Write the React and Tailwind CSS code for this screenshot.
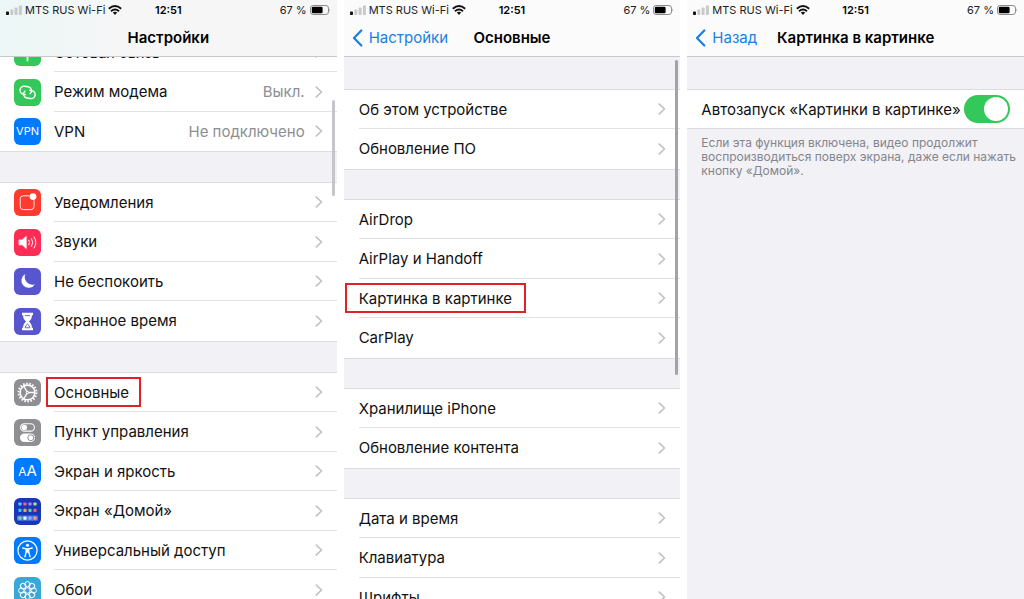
const PETALS = [0, 45, 90, 135, 180, 225, 270, 315];

const HOME_DOTS = [
  ["#5ac8fa", "#ff5e7a", "#b07cff", "#b6e36b"],
  ["#34c5e8", "#ff9f4a", "#5ad0a0", "#ff5a6a"],
  ["#6fe08a", "#f4f4ff", "#7fb4ff", "#ff9a6a"],
];

function Svg({ children }) {
  return (
    <svg viewBox="0 0 27 27" className="h-full w-full" fill="none" stroke="white" strokeLinecap="round" strokeLinejoin="round" aria-hidden="true">
      {children}
    </svg>
  );
}

function CellularIcon() {
  return (
    <Svg>
      <path d="M13.5 11v10.5" strokeWidth="1.8" />
      <path d="M9.5 17.5h8" strokeWidth="1.2" />
      <circle cx="13.5" cy="10" r="2" fill="white" />
    </Svg>
  );
}

function HotspotIcon() {
  return (
    <Svg>
      <g strokeWidth="1.4">
        <path d="M11.8 15.4H9.9a4 4 0 0 1 0-8h3.6a4 4 0 0 1 3 6.6" transform="rotate(8 11 12)" />
        <path d="M15.2 11.4h2a4 4 0 0 1 0 8h-3.6a4 4 0 0 1-3-6.6" transform="rotate(8 16 15)" />
      </g>
    </Svg>
  );
}

function NotificationsIcon() {
  return (
    <Svg>
      <path d="M15 6.8H9.2a3 3 0 0 0-3 3v7.8a3 3 0 0 0 3 3H17a3 3 0 0 0 3-3v-6" strokeWidth="0.9" />
      <circle cx="19" cy="7.6" r="3.4" fill="white" stroke="none" />
    </Svg>
  );
}

function SoundIcon() {
  return (
    <Svg>
      <path d="M5.4 11h2.8l4-3.6v12l-4-3.6H5.4z" fill="white" strokeWidth="0.8" />
      <path d="M14.9 11.2q1.4 2.2 0 4.6M17.5 9.6q2.6 3.8 0 7.8M20.1 8q3.6 5.4 0 11" strokeWidth="1" />
    </Svg>
  );
}

function MoonIcon() {
  return (
    <Svg>
      <path d="M11.4 6A7.3 7.3 0 1 0 21 16.2 A7.6 7.6 0 0 1 11.4 6z" fill="white" stroke="none" />
    </Svg>
  );
}

function HourglassIcon() {
  return (
    <Svg>
      <path d="M8 4.8h11v2.4h-1.1c0 3-1 4.6-3 6.3 2 1.7 3 3.3 3 6.3H19v2.4H8v-2.4h1.1c0-3 1-4.6 3-6.3-2-1.7-3-3.3-3-6.3H8z" fill="white" stroke="none" />
      <path d="M11.3 7.6h4.4M11.2 19.4q.4-2.4 2.3-3.3 1.9.9 2.3 3.3z" stroke="#5856ce" strokeWidth="0.9" />
    </Svg>
  );
}

function GearIcon() {
  return (
    <Svg>
      <circle cx="13.5" cy="13.5" r="9" strokeWidth="1.9" strokeDasharray="1.6 1.54" strokeLinecap="butt" />
      <circle cx="13.5" cy="13.5" r="7.4" strokeWidth="1.6" />
      <circle cx="13.5" cy="13.5" r="1.2" strokeWidth="1" />
      <path d="M14.5 13.5h6M13 12.6L9.6 7M13 14.4L9.6 20" strokeWidth="1.3" />
    </Svg>
  );
}

function ControlIcon() {
  return (
    <Svg>
      <rect x="6.6" y="4.7" width="13.8" height="7.4" rx="3.7" strokeWidth="1.1" />
      <circle cx="10.4" cy="8.4" r="2.7" fill="white" stroke="none" />
      <rect x="6" y="14.6" width="15" height="8.3" rx="4.15" fill="white" stroke="none" />
      <circle cx="16.8" cy="18.75" r="3" fill="white" stroke="#8e8e93" strokeWidth="1" />
    </Svg>
  );
}

function HomeIcon() {
  return (
    <Svg>
      <rect x="3" y="17.4" width="21" height="5.4" rx="1.4" fill="#4f78e0" stroke="none" />
      {HOME_DOTS.map((row, y) =>
        row.map((color, x) => (
          <rect key={`${x}-${y}`} x={4.4 + x * 5} y={4.4 + y * 6.4 + (y === 2 ? 1.4 : 0)} width="3.2" height="3.2" rx="0.8" fill={color} stroke="none" />
        ))
      )}
    </Svg>
  );
}

function AccessibilityIcon() {
  return (
    <Svg>
      <circle cx="13.5" cy="13.5" r="9.6" strokeWidth="1.2" />
      <circle cx="13.5" cy="8.2" r="1.5" fill="white" stroke="none" />
      <path d="M8.7 11l3.6.8v3l-1.4 5M18.3 11l-3.6.8v3l1.4 5" strokeWidth="1.3" />
      <path d="M12.3 11.4h2.4v4.2h-2.4z" fill="white" strokeWidth="0.5" />
    </Svg>
  );
}

function WallpaperIcon() {
  return (
    <Svg>
      <g strokeWidth="1">
        {PETALS.map((a) => (
          <circle key={a} cx="13.5" cy="7.3" r="2.7" transform={`rotate(${a} 13.5 13.5)`} />
        ))}
        <circle cx="13.5" cy="13.5" r="2.8" />
      </g>
    </Svg>
  );
}

const mainGroups = [
  [
    { label: "Сотовая связь", bg: "bg-[#34c759]", icon: <CellularIcon /> },
    { label: "Режим модема", value: "Выкл.", bg: "bg-[#34c759]", icon: <HotspotIcon /> },
    { label: "VPN", value: "Не подключено", bg: "bg-[#007aff]", icon: <span className="text-[11px]">VPN</span> },
  ],
  [
    { label: "Уведомления", bg: "bg-[#ff3b30]", icon: <NotificationsIcon /> },
    { label: "Звуки", bg: "bg-[#ff2d55]", icon: <SoundIcon /> },
    { label: "Не беспокоить", bg: "bg-[#5856ce]", icon: <MoonIcon /> },
    { label: "Экранное время", bg: "bg-[#5856ce]", icon: <HourglassIcon /> },
  ],
  [
    { label: "Основные", bg: "bg-[#8e8e93]", icon: <GearIcon />, mark: "-left-2 -right-3 -inset-y-[3px]" },
    { label: "Пункт управления", bg: "bg-[#8e8e93]", icon: <ControlIcon /> },
    {
      label: "Экран и яркость",
      bg: "bg-[#007aff]",
      icon: (
        <span className="text-[15px]">
          <span className="text-[12px]">A</span>A
        </span>
      ),
    },
    { label: "Экран «Домой»", bg: "bg-[#1838b8]", icon: <HomeIcon /> },
    { label: "Универсальный доступ", bg: "bg-[#007aff]", icon: <AccessibilityIcon /> },
    { label: "Обои", bg: "bg-[#37a8d8]", icon: <WallpaperIcon /> },
  ],
];

const generalGroups = [
  [{ label: "Об этом устройстве" }, { label: "Обновление ПО" }],
  [
    { label: "AirDrop" },
    { label: "AirPlay и Handoff" },
    { label: "Картинка в картинке", mark: "-inset-x-3.5 -inset-y-[3px]" },
    { label: "CarPlay" },
  ],
  [{ label: "Хранилище iPhone" }, { label: "Обновление контента" }],
  [{ label: "Дата и время" }, { label: "Клавиатура" }, { label: "Шрифты" }],
];

function StatusBar() {
  return (
    <div className="grid h-5 grid-cols-[1fr_auto_1fr] items-center px-1.5 text-[11px] text-[#222]">
      <div className="flex items-center gap-[3px] whitespace-nowrap">
        <svg viewBox="0 0 16 10" className="h-2.5 w-4" aria-hidden="true">
          <rect x="0" y="6.5" width="3" height="3.5" rx="0.8" fill="#111" />
          <rect x="4.3" y="4.5" width="3" height="5.5" rx="0.8" fill="#c9c9cb" />
          <rect x="8.6" y="2.5" width="3" height="7.5" rx="0.8" fill="#c9c9cb" />
          <rect x="12.9" y="0.5" width="3" height="9.5" rx="0.8" fill="#c9c9cb" />
        </svg>
        <span>MTS RUS Wi-Fi</span>
        <svg viewBox="0 0 14 10" className="h-2.5 w-3.5" fill="none" stroke="#111" strokeWidth="1.9" aria-hidden="true">
          <path d="M0.8 3.8Q7-1.6 13.2 3.8M3 6.2Q7 2.8 11 6.2" />
          <path d="M7 9.9L4.8 7.6Q7 6 9.2 7.6z" fill="#111" stroke="none" />
        </svg>
      </div>
      <span className="font-semibold text-black">12:51</span>
      <div className="flex items-center justify-end gap-[3px]">
        <span>67 %</span>
        <svg viewBox="0 0 21 10" className="h-2.5 w-[21px]" aria-hidden="true">
          <rect x="0.5" y="0.5" width="18" height="9" rx="2.6" fill="none" stroke="#8b8b8d" />
          <rect x="1.8" y="1.8" width="10.8" height="6.4" rx="1.3" fill="#000" />
          <path d="M19.4 3.4q1.5 1.6 0 3.2z" fill="#8b8b8d" />
        </svg>
      </div>
    </div>
  );
}

function Header({ title, back, className = "bg-[#fbfbfc]" }) {
  return (
    <header className={`shrink-0 border-b border-[#c9c9cd] ${className}`}>
      <StatusBar />
      <div className="grid h-9 grid-cols-[1fr_auto_1fr] items-center px-2">
        <div>
          {back && (
            <button type="button" className="flex items-center gap-1.5 text-[15px] text-[#1a7ee6]">
              <svg viewBox="0 0 11 18" className="h-[18px] w-[11px]" fill="none" stroke="currentColor" strokeWidth="2.2" strokeLinecap="round" strokeLinejoin="round" aria-hidden="true">
                <path d="M9.3 1.5L2 9l7.3 7.5" />
              </svg>
              {back}
            </button>
          )}
        </div>
        <h1 className="text-[15px] font-semibold text-black">{title}</h1>
        <div />
      </div>
    </header>
  );
}

function Row({ label, value, icon, bg, mark }) {
  return (
    <li className="group odd:h-[39px] even:h-10">
      <a href="#" className={`flex h-full items-center gap-[13px] ${icon ? "pl-3.5" : "pl-[15px]"}`}>
        {icon && (
          <span className={`flex size-[27px] shrink-0 items-center justify-center overflow-hidden rounded-md text-white ${bg}`}>
            {icon}
          </span>
        )}
        <span className="flex h-full min-w-0 flex-1 items-center gap-2.5 border-b border-[#e2e2e5] pr-3.5 group-last:border-transparent">
          <span className="relative pt-0.5 text-[#111]">
            {label}
            {mark && <span className={`absolute border-2 border-[#dd2328] ${mark}`} />}
          </span>
          <span className="ml-auto pt-0.5 text-[#8e8e92]">{value}</span>
          <svg viewBox="0 0 8 12" className="h-3 w-2 shrink-0" fill="none" stroke="#c2c2c5" strokeWidth="1.7" strokeLinecap="round" strokeLinejoin="round" aria-hidden="true">
            <path d="M1.3 1.2L6.5 6l-5.2 4.8" />
          </svg>
        </span>
      </a>
    </li>
  );
}

function Groups({ groups, className }) {
  return (
    <div className={`flex flex-col text-[15px] ${className}`}>
      {groups.map((rows, i) => (
        <ul key={i} className="bg-white ring-1 ring-[#dddde1]">
          {rows.map((row) => (
            <Row key={row.label} {...row} />
          ))}
        </ul>
      ))}
    </div>
  );
}

function Screen({ children }) {
  return <section className="flex min-h-0 min-w-0 flex-col overflow-hidden bg-[#f1f1f6]">{children}</section>;
}

export default function App() {
  return (
    <div className="grid h-screen grid-cols-3 grid-rows-1 gap-[7px] overflow-hidden bg-white font-['Inter','Liberation_Sans',sans-serif]">
      <Screen>
        <Header title="Настройки" className="bg-linear-to-r from-[#ebf7f6] via-[#f6f6f7] via-35% to-[#f6f6f7]" />
        <main className="relative min-h-0 flex-1 overflow-hidden">
          <Groups groups={mainGroups} className="-mt-6 gap-8" />
          <div className="absolute right-0.5 top-[43px] h-24 w-[3px] rounded-full bg-[#c6c6ca]" />
        </main>
      </Screen>

      <Screen>
        <Header title="Основные" back="Настройки" />
        <main className="relative min-h-0 flex-1 overflow-hidden">
          <Groups groups={generalGroups} className="gap-[31px] pt-[33px]" />
          <div className="absolute right-0.5 top-[3px] h-[315px] w-[3px] rounded-full bg-[#a3a3a6]" />
        </main>
      </Screen>

      <Screen>
        <Header title="Картинка в картинке" back="Назад" />
        <main className="min-h-0 flex-1 overflow-hidden pt-[33px]">
          <div className="flex h-[38px] items-center justify-between bg-white px-3.5 text-[15px] text-[#111] ring-1 ring-[#dddde1]">
            <label htmlFor="pip" className="whitespace-nowrap pt-0.5">
              Автозапуск «Картинки в картинке»
            </label>
            <input
              id="pip"
              type="checkbox"
              role="switch"
              defaultChecked
              className="flex h-7 w-[46px] shrink-0 appearance-none items-center rounded-full bg-[#d9d9dd] px-0.5 before:size-6 before:rounded-full before:bg-white checked:justify-end checked:bg-[#34c759]"
            />
          </div>
          <p className="pl-3.5 pr-1 pt-2 text-[12px] leading-[14px] text-[#85858b]">
            Если эта функция включена, видео продолжит воспроизводиться поверх экрана, даже если нажать кнопку «Домой».
          </p>
        </main>
      </Screen>
    </div>
  );
}
